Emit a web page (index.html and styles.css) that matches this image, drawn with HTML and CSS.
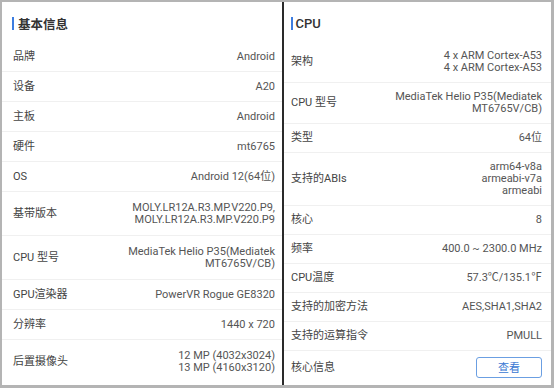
FILE: index.html
```html
<!DOCTYPE html>
<html lang="zh-CN">
<head>
<meta charset="utf-8">
<title>设备信息</title>
<link rel="stylesheet" href="styles.css">
</head>
<body>
<div class="frame">
  <section class="panel panel-left">
    <div class="heading"><span class="bar"></span><span class="title">基本信息</span></div>
    <div class="row"><span class="label">品牌</span><span class="value">Android</span></div>
    <div class="row"><span class="label">设备</span><span class="value">A20</span></div>
    <div class="row"><span class="label">主板</span><span class="value">Android</span></div>
    <div class="row"><span class="label">硬件</span><span class="value">mt6765</span></div>
    <div class="row"><span class="label">OS</span><span class="value">Android 12(64位)</span></div>
    <div class="row multi"><span class="label">基带版本</span><span class="value">MOLY.LR12A.R3.MP.V220.P9,<br>MOLY.LR12A.R3.MP.V220.P9</span></div>
    <div class="row multi"><span class="label">CPU 型号</span><span class="value">MediaTek Helio P35(Mediatek<br>MT6765V/CB)</span></div>
    <div class="row"><span class="label">GPU渲染器</span><span class="value">PowerVR Rogue GE8320</span></div>
    <div class="row"><span class="label">分辨率</span><span class="value">1440 x 720</span></div>
    <div class="row multi last"><span class="label">后置摄像头</span><span class="value">12 MP (4032x3024)<br>13 MP (4160x3120)</span></div>
  </section>
  <div class="divider"></div>
  <section class="panel panel-right">
    <div class="heading"><span class="bar"></span><span class="title title-latin">CPU</span></div>
    <div class="row"><span class="label">架构</span><span class="value">4 x ARM Cortex-A53<br>4 x ARM Cortex-A53</span></div>
    <div class="row"><span class="label">CPU 型号</span><span class="value">MediaTek Helio P35(Mediatek<br>MT6765V/CB)</span></div>
    <div class="row"><span class="label">类型</span><span class="value">64位</span></div>
    <div class="row"><span class="label">支持的ABIs</span><span class="value">arm64-v8a<br>armeabi-v7a<br>armeabi</span></div>
    <div class="row"><span class="label">核心</span><span class="value">8</span></div>
    <div class="row"><span class="label">频率</span><span class="value">400.0 ~ 2300.0 MHz</span></div>
    <div class="row"><span class="label">CPU温度</span><span class="value">57.3℃/135.1℉</span></div>
    <div class="row"><span class="label">支持的加密方法</span><span class="value">AES,SHA1,SHA2</span></div>
    <div class="row"><span class="label">支持的运算指令</span><span class="value">PMULL</span></div>
    <div class="row btn-row last"><span class="label">核心信息</span><button class="btn">查看</button></div>
  </section>
</div>
</body>
</html>
```
FILE: styles.css
```css
html, body {
  margin: 0;
  padding: 0;
  background: #f4f4f4;
}
body {
  font-family: Roboto, "Noto Sans CJK SC", sans-serif;
  color: #444;
}
.frame {
  display: flex;
  width: 554px;
  height: 388px;
  box-sizing: border-box;
  border: 2px solid #b4b4b4;
  border-right-width: 3px;
  border-bottom-width: 3px;
  background: #fff;
}
.panel {
  display: flex;
  flex-direction: column;
  background: #fff;
}
.panel-left {
  width: 280px;
}
.panel-right {
  flex: 1;
}
.divider {
  width: 2px;
  background: #2a2a2a;
}
.heading {
  height: 40px;
  display: flex;
  align-items: center;
  padding-left: 10px;
  gap: 4px;
}
.panel-right .heading {
  padding-left: 7px;
  gap: 3px;
}
.bar {
  width: 2px;
  height: 13px;
  background: #3d7de0;
  margin-top: 2px;
}
.panel-right .bar {
  width: 1.5px;
}
.title {
  font-size: 12.5px;
  font-weight: 700;
  color: #333;
  margin-top: 2px;
}
.title-latin {
  font-weight: 500;
  font-size: 13px;
}
.row {
  display: flex;
  align-items: center;
  justify-content: space-between;
  border-bottom: 1px solid #f0f0f0;
  font-size: 11px;
  line-height: 12px;
}
.panel-left .row {
  padding: 8.5px 7px 8.5px 11px;
}
.panel-left .row.multi {
  padding-top: 9.5px;
  padding-bottom: 9.5px;
}
.panel-right .row {
  padding: 8px 9px 8px 7px;
}
.row.last {
  border-bottom: none;
}
.label {
  color: #444;
  white-space: nowrap;
}
.value {
  color: #555;
  text-align: right;
}
.panel-right .row.btn-row {
  padding-top: 6px;
  padding-bottom: 6px;
}
.btn {
  width: 66px;
  height: 21px;
  box-sizing: border-box;
  border: 1px solid #6b9fe2;
  border-radius: 3px;
  background: #fff;
  color: #3b78d3;
  font-family: "Noto Sans CJK SC", sans-serif;
  font-size: 11px;
  padding: 0;
  line-height: 19px;
}
```
